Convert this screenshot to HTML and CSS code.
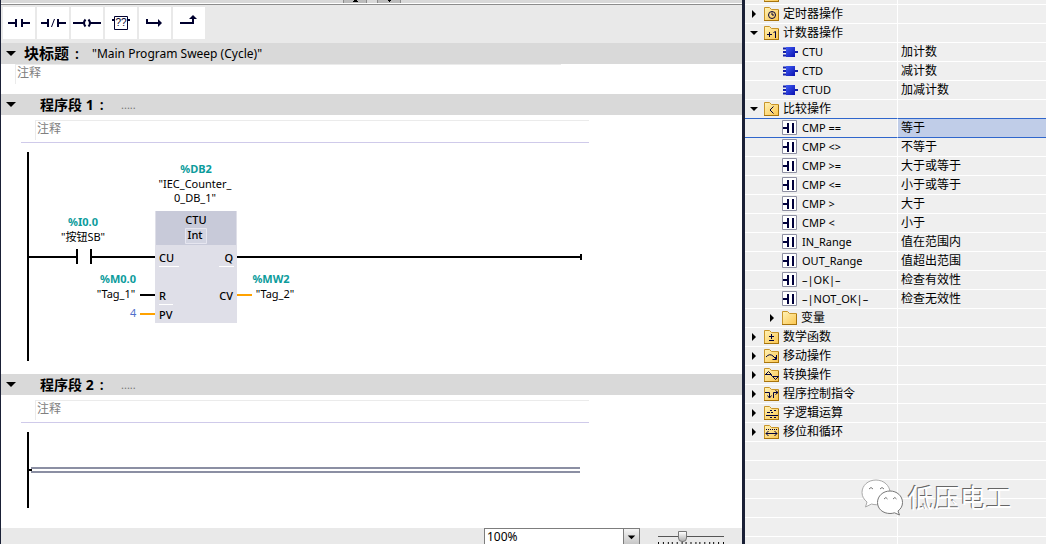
FILE: index.html
```html
<!DOCTYPE html>
<html lang="zh-CN">
<head>
<meta charset="utf-8">
<title>Main Program Sweep (Cycle)</title>
<link rel="stylesheet" href="styles.css">
</head>
<body>
<svg class="defs" aria-hidden="true">
  <defs>
    <linearGradient id="gold" x1="0" y1="0" x2="1" y2="1"><stop offset="0" stop-color="#fff3b8"/><stop offset="1" stop-color="#fbc64f"/></linearGradient>
    <linearGradient id="blue" x1="0" y1="0" x2="1" y2="1"><stop offset="0" stop-color="#3f5cf5"/><stop offset="1" stop-color="#0a10b0"/></linearGradient>
    <symbol id="folder" viewBox="0 0 16 16"><path d="M.5 14.5V1.5h5l2 2h7v11z" fill="url(#gold)" stroke="#c8952a"/><path d="M0 14.500h15M14.500 4v11" stroke="#a8740c" fill="none"/></symbol>
    <symbol id="block" viewBox="0 0 16 16"><path d="M1 4.500h4M1 8h4M1 11.500h4M13 8h3" stroke="#1420a8" stroke-width="2"/><path d="M4 3h9v10H4z" fill="url(#blue)"/></symbol>
    <symbol id="compare" viewBox="0 0 16 16"><path d="M.5.5h14v14H.5z" fill="#fff" stroke="#8f90a3"/><path d="M1 8h5M6 3v10M11 3v10" stroke="#00003c" stroke-width="2" fill="none"/></symbol>
    <symbol id="open" viewBox="0 0 8 8"><path d="M0 2h8L4 6z"/></symbol>
    <symbol id="closed" viewBox="0 0 8 8"><path d="M2 0l4 4-4 4z"/></symbol>
    <symbol id="bigopen" viewBox="0 0 10 6"><path d="M0 0h10L5 5z"/></symbol>
  </defs>
</svg>
<div class="app">
  <main class="editor">
    <div class="splitter">
      <button class="split" aria-label="向上"><svg viewBox="0 0 22 3"><path d="M10 0h3v1h1v1H9V1h1z"/></svg></button>
      <button class="split" aria-label="向下"><svg viewBox="0 0 22 3"><path d="M10 0h3v1h-1v1h-1V1h-1z"/></svg></button>
    </div>
    <div class="toolbar">
      <button class="tool" aria-label="常开触点"><svg viewBox="0 0 32 32"><path d="M5 16h8M20 16h7M13 12v8M19 12v8"/></svg></button>
      <button class="tool" aria-label="常闭触点"><svg viewBox="0 0 32 32"><path d="M4 16h8M21 16h8M11 12v8M21 12v8"/><path class="thin" d="M14.500 20l3-8"/></svg></button>
      <button class="tool" aria-label="线圈"><svg viewBox="0 0 32 32"><path d="M2 16h10M19 16h11"/><path class="mid" d="M14.500 12.500q-3 3.500 0 7M17.500 12.500q3 3.500 0 7"/></svg></button>
      <button class="tool" aria-label="空功能框"><svg viewBox="0 0 32 32"><path class="thin" d="M9.500 9.500h13v13h-13z"/><path d="M7 13h2M23 13h2"/><text x="16" y="19">??</text></svg></button>
      <button class="tool" aria-label="打开分支"><svg viewBox="0 0 32 32"><path d="M8 12v4h13"/><path class="solid" d="M19 12l4 4-4 4z"/></svg></button>
      <button class="tool" aria-label="关闭分支"><svg viewBox="0 0 32 32"><path d="M7 16h13v-5"/><path class="solid" d="M16 12l4-4 4 4z"/></svg></button>
    </div>

    <header class="bar">
      <button class="fold" aria-label="折叠"><svg viewBox="0 0 10 6"><use href="#bigopen"/></svg></button>
      <h1 class="heading">块标题<span class="colon">:</span></h1><span class="name">"Main Program Sweep (Cycle)"</span>
    </header>
    <div class="blocknote"><p class="note">注释</p></div>

    <section>
      <header class="bar network">
        <button class="fold" aria-label="折叠"><svg viewBox="0 0 10 6"><use href="#bigopen"/></svg></button>
        <h2 class="heading">程序段 1<span class="colon">:</span></h2><span class="dots">.....</span>
      </header>
      <div class="netnote"><p class="note">注释</p></div>
      <svg class="ladder" width="600" height="231" viewBox="0 0 600 231" role="img" aria-label="程序段 1">
        <path class="wire" d="M27 9v209M28 114h48M76 106v15M90 106v15M90 114h64M236 114h344M580 111v6M139 152h15"/>
        <path class="orange" d="M139 171h15M236 152h15"/>
        <path fill="#dfdfe8" d="M154 68h82v112h-82z"/>
        <path fill="#c8cad9" d="M155 68h80v34h-80z"/>
        <path fill="#d2d4e1" stroke="#e6e6f0" d="M184.500 85.500h21v15h-21z"/>
        <path class="shine" d="M158 123.500h20M218 123.500h15M158 161.500h14"/>
        <g class="address"><text x="195" y="30">%DB2</text><text x="82" y="83">%I0.0</text><text x="117" y="140">%M0.0</text><text x="270" y="140">%MW2</text></g>
        <g class="center"><text x="194" y="45">"IEC_Counter_</text><text x="194" y="59">0_DB_1"</text><text x="82" y="98">"按钮SB"</text><text x="115" y="155">"Tag_1"</text><text x="274" y="155">"Tag_2"</text></g>
        <g class="center pin"><text x="195" y="81">CTU</text><text x="194" y="96">Int</text></g>
        <g class="pin"><text x="158" y="119">CU</text><text x="158" y="157">R</text><text x="158" y="176">PV</text></g>
        <g class="pin end"><text x="232" y="119">Q</text><text x="232" y="157">CV</text></g>
        <text class="value" x="129" y="174">4</text>
      </svg>
    </section>

    <section class="last">
      <header class="bar network">
        <button class="fold" aria-label="折叠"><svg viewBox="0 0 10 6"><use href="#bigopen"/></svg></button>
        <h2 class="heading">程序段 2<span class="colon">:</span></h2><span class="dots">.....</span>
      </header>
      <div class="netnote"><p class="note">注释</p></div>
      <svg class="ladder" width="600" height="100" viewBox="0 0 600 100" role="img" aria-label="程序段 2">
        <path class="wire" d="M27 9v76M28 47h3"/>
        <path fill="#8b8fa3" d="M30 44h549v2H30zM30 48h549v2H30z"/>
      </svg>
    </section>

    <footer class="status">
      <div class="zoombox">
        <select class="zoom" aria-label="缩放"><option>100%</option></select>
        <svg class="drop" viewBox="0 0 16 15"><path d="M4 6h8L8 10z"/></svg>
      </div>
      <div class="slide">
        <input class="slider" type="range" min="0" max="14" value="5" aria-label="缩放比例">
        <svg class="ticks" viewBox="0 0 67 2"><path d="M.5 0v2M5.500 0v2M10.500 0v2M14.500 0v2M19.500 0v2M24.500 0v2M28.500 0v2M33.500 0v2M38.500 0v2M42.500 0v2M47.500 0v2M52.500 0v2M56.500 0v2M61.500 0v2M66.500 0v2" stroke="#000"/></svg>
      </div>
    </footer>
  </main>

  <aside class="catalog">
    <table class="tree">
      <colgroup><col class="col-name"><col></colgroup>
      <tbody>
        <tr><td><div class="item"><svg class="arrow"><use href="#closed"/></svg><svg class="icon"><use href="#folder"/></svg>位逻辑运算</div></td><td></td></tr>
        <tr><td><div class="item"><svg class="arrow"><use href="#closed"/></svg><svg class="icon mark"><use href="#folder"/><circle cx="8" cy="9" r="3.500"/><path d="M8 6.500V9h2"/></svg>定时器操作</div></td><td></td></tr>
        <tr><td><div class="item"><svg class="arrow"><use href="#open"/></svg><svg class="icon mark"><use href="#folder"/><path d="M3 9.500h5M5.500 7v5M9.500 7.500l2-1V13"/></svg>计数器操作</div></td><td></td></tr>
        <tr><td><div class="item leaf"><svg class="icon"><use href="#block"/></svg>CTU</div></td><td>加计数</td></tr>
        <tr><td><div class="item leaf"><svg class="icon"><use href="#block"/></svg>CTD</div></td><td>减计数</td></tr>
        <tr><td><div class="item leaf"><svg class="icon"><use href="#block"/></svg>CTUD</div></td><td>加减计数</td></tr>
        <tr class="before"><td><div class="item"><svg class="arrow"><use href="#open"/></svg><svg class="icon mark"><use href="#folder"/><path d="M9.500 5.500L6 9l3.500 3.500"/></svg>比较操作</div></td><td></td></tr>
        <tr class="selected"><td><div class="item leaf"><svg class="icon"><use href="#compare"/></svg>CMP ==</div></td><td>等于</td></tr>
        <tr><td><div class="item leaf"><svg class="icon"><use href="#compare"/></svg>CMP &lt;&gt;</div></td><td>不等于</td></tr>
        <tr><td><div class="item leaf"><svg class="icon"><use href="#compare"/></svg>CMP &gt;=</div></td><td>大于或等于</td></tr>
        <tr><td><div class="item leaf"><svg class="icon"><use href="#compare"/></svg>CMP &lt;=</div></td><td>小于或等于</td></tr>
        <tr><td><div class="item leaf"><svg class="icon"><use href="#compare"/></svg>CMP &gt;</div></td><td>大于</td></tr>
        <tr><td><div class="item leaf"><svg class="icon"><use href="#compare"/></svg>CMP &lt;</div></td><td>小于</td></tr>
        <tr><td><div class="item leaf"><svg class="icon"><use href="#compare"/></svg>IN_Range</div></td><td>值在范围内</td></tr>
        <tr><td><div class="item leaf"><svg class="icon"><use href="#compare"/></svg>OUT_Range</div></td><td>值超出范围</td></tr>
        <tr><td><div class="item leaf"><svg class="icon"><use href="#compare"/></svg>–|OK|–</div></td><td>检查有效性</td></tr>
        <tr><td><div class="item leaf"><svg class="icon"><use href="#compare"/></svg>–|NOT_OK|–</div></td><td>检查无效性</td></tr>
        <tr><td><div class="item sub"><svg class="arrow"><use href="#closed"/></svg><svg class="icon"><use href="#folder"/></svg>变量</div></td><td></td></tr>
        <tr><td><div class="item"><svg class="arrow"><use href="#closed"/></svg><svg class="icon mark"><use href="#folder"/><path d="M5 7.500h5M7.500 5v5M5 11.500h5"/></svg>数学函数</div></td><td></td></tr>
        <tr><td><div class="item"><svg class="arrow"><use href="#closed"/></svg><svg class="icon mark"><use href="#folder"/><path d="M2 9q3.500-4 7-1l3 3M12.500 7v4.500H8.500M11.500 9v2"/></svg>移动操作</div></td><td></td></tr>
        <tr><td><div class="item"><svg class="arrow"><use href="#closed"/></svg><svg class="icon mark"><use href="#folder"/><path d="M1 7.500h6.500L4.500 4.500 1.500 7.500M6.500 7.500l2 2h6l-3 3-3-3"/></svg>转换操作</div></td><td></td></tr>
        <tr><td><div class="item"><svg class="arrow"><use href="#closed"/></svg><svg class="icon mark"><use href="#folder"/><path d="M1 6.500h4.500V12M3.500 9.500l2 2.500 2-2.500M9.500 12V6.500H14M11.500 4.500l2.500 2-2.500 2"/></svg>程序控制指令</div></td><td></td></tr>
        <tr><td><div class="item"><svg class="arrow"><use href="#closed"/></svg><svg class="icon mark"><use href="#folder"/><path d="M2 10.500h12M6 5.500h2M10 5.500h2M3 7.500h3M7 7.500h2M6 12.500h2M10 12.500h2"/></svg>字逻辑运算</div></td><td></td></tr>
        <tr><td><div class="item"><svg class="arrow"><use href="#closed"/></svg><svg class="icon mark"><use href="#folder"/><path stroke-dasharray="1 1" d="M2 5.500h12"/><path d="M2 9.500h11M4.500 7L2 9.500 4.500 12M10.500 7l2.500 2.500-2.500 2.500"/></svg>移位和循环</div></td><td></td></tr>
        <tr><td></td><td></td></tr><tr><td></td><td></td></tr><tr><td></td><td></td></tr><tr><td></td><td></td></tr><tr><td></td><td></td></tr><tr><td></td><td></td></tr>
      </tbody>
    </table>
    <div class="watermark">
      <svg class="chat" viewBox="0 0 42 38"><g fill="#fff" stroke="#aaa" stroke-width="1"><path d="M15 1C7 1 1 6.500 1 13.500c0 4 2 7 5 9.500l-1.500 5 6-3c2 .600 3 .700 5 .700C23 25.500 29 20 29 13.500S23 1 15 1z"/><path stroke="#777" d="M29 12c-7 0-12.500 5-12.500 11.500S22 34.500 29 34.500c1.500 0 3-.200 4.500-.700l5 2.200-1.500-4c3-2.200 4.500-5 4.500-8.500C41.500 17 36 12 29 12z"/></g><g fill="none" stroke="#777"><path d="M8 10q2-3 4 0M19 10q2-3 4 0M23 20q2-3 3.500 0M32 20q2-3 3.500 0"/></g></svg>
      <span>低压电工</span>
    </div>
  </aside>
</div>
</body>
</html>
```

FILE: styles.css
```css
* { box-sizing: border-box; }

body {
  margin: 0;
  font: 11px/14px "Noto Sans", "Noto Sans CJK SC", sans-serif;
  color: #000;
}

button { border: 0; padding: 0; background: none; }
svg { display: block; }
.defs { position: absolute; width: 0; height: 0; }

.app {
  display: grid;
  grid-template-columns: minmax(0, 1fr) 304px;
  height: 100vh;
  overflow: hidden;
}

/* Editor */
.editor {
  display: flex;
  flex-direction: column;
  min-height: 0;
  border-left: 1px solid #1a2036;
  background: #fff;
}

.splitter {
  display: flex;
  flex: none;
  justify-content: center;
  gap: 10px;
  height: 5px;
  background: #d9d9d9;
  border-bottom: 1px solid #8c8c8c;
  box-shadow: inset 0 -1px #fff;
}
.split { width: 24px; height: 3px; border: 1px solid #8c8c8c; border-width: 0 1px; background: #bcbcbc; }

.toolbar {
  display: flex;
  flex: none;
  gap: 2px;
  padding: 2px 2px 4px;
  background: #e9e9e9;
}
.tool { width: 32px; height: 32px; background: #fff; }
.tool path { fill: none; stroke: #00002e; stroke-width: 2; }
.tool .thin { stroke-width: 1; }
.tool .solid { fill: #00002e; stroke: none; }
.tool text { font-size: 10px; text-anchor: middle; fill: #00002e; }

.bar {
  display: flex;
  flex: none;
  align-items: center;
  height: 21px;
  padding-left: 5px;
  background: #d9d9d9;
}
.fold { width: 10px; height: 6px; }
.heading {
  margin: 0 0 0 8px;
  width: 68px;
  font-size: 15px;
  line-height: 20px;
  font-weight: 700;
  white-space: nowrap;
}
.colon { margin-left: 6px; font-size: 14px; font-weight: 600; }
.network .heading { margin-left: 24px; width: 81px; font-size: 14px; }
.name { font-size: 12px; }
.dots { color: #777; }

.note {
  margin: 0;
  padding-left: 1px;
  font-size: 12px;
  line-height: 16px;
  color: #808080;
  border: 1px solid #ebebeb;
  border-width: 1px 0 0 1px;
}
.blocknote { flex: none; height: 30px; padding-left: 14px; width: 560px; }
.blocknote .note { height: 20px; }
.netnote {
  width: 568px;
  height: 28px;
  margin-left: 20px;
  padding: 5px 0 0 14px;
  border-bottom: 1px solid #cfcaea;
}
.netnote .note { height: 20px; }

.last { flex: 1; min-height: 0; overflow: hidden; }

/* Ladder diagram */
.ladder text { font-size: 11px; }
.wire { fill: none; stroke: #000; stroke-width: 2; }
.orange { fill: none; stroke: #ffa200; stroke-width: 2; }
.shine { fill: none; stroke: #fff; }
.address { font-weight: 700; fill: #0c9c9c; text-anchor: middle; }
.center { text-anchor: middle; }
.end { text-anchor: end; }
.pin { font-weight: 500; }
.value { fill: #5070cc; }

/* Status bar */
.status {
  display: flex;
  flex: none;
  justify-content: flex-end;
  gap: 18px;
  height: 16px;
  padding-right: 18px;
  overflow: hidden;
  background: #e9e9e9;
}
.zoombox { position: relative; width: 156px; }
.zoom {
  appearance: none;
  width: 100%;
  height: 18px;
  padding: 0 2px;
  border: 1px solid #7d7d7d;
  border-radius: 0;
  background: #fff;
  font: 12px/16px "Noto Sans", sans-serif;
  color: #000;
}
.drop {
  position: absolute;
  top: 1px;
  right: 1px;
  width: 16px;
  height: 16px;
  border-left: 1px solid #7d7d7d;
  background: linear-gradient(#f4f4f4, #c4c4c4);
  pointer-events: none;
}
.slide { width: 66px; padding-top: 3px; }
.slider {
  appearance: none;
  display: block;
  width: 100%;
  height: 11px;
  margin: 0;
  background: linear-gradient(#555, #555) center / 100% 1px no-repeat;
}
.slider::-webkit-slider-thumb {
  appearance: none;
  width: 9px;
  height: 11px;
  background: linear-gradient(#fff, #b0b0b0);
  border: 1px solid #777;
  border-radius: 0 0 4px 4px;
}
.ticks { width: 100%; height: 2px; }

/* Instruction catalog */
.catalog {
  position: relative;
  overflow: hidden;
  border-left: 3px solid #1a2036;
  background: #efefef;
}
.tree {
  width: 100%;
  margin-top: -14px;
  border-collapse: separate;
  border-spacing: 0;
  table-layout: fixed;
}
.col-name { width: 153px; }
.tree td {
  height: 19px;
  padding: 0 0 0 3px;
  border-bottom: 1px solid #fff;
  font-size: 12px;
  line-height: 18px;
  white-space: nowrap;
}
.tree td:first-child { padding: 0; border-right: 1px solid #fff; }
.item { display: flex; align-items: center; height: 18px; padding-left: 5px; }
.leaf { padding-left: 37px; font-size: 11px; }
.sub { padding-left: 23px; }
.arrow { width: 8px; height: 8px; margin-right: 6px; }
.icon { width: 16px; height: 16px; margin-right: 3px; }
.leaf .icon { margin-right: 4px; }
.mark path, .mark circle { fill: none; stroke: #00003c; }
.tree .before td, .tree .selected td { border-bottom-color: #2f66cc; }
.selected td:last-child { background: #c0cde8; }

.watermark {
  position: absolute;
  right: 34px;
  bottom: 27px;
  display: flex;
  align-items: center;
  gap: 5px;
  font-size: 26px;
  line-height: 38px;
  color: #fff;
  text-shadow: -1px -1px #666;
}
.chat { width: 42px; height: 38px; }
```
